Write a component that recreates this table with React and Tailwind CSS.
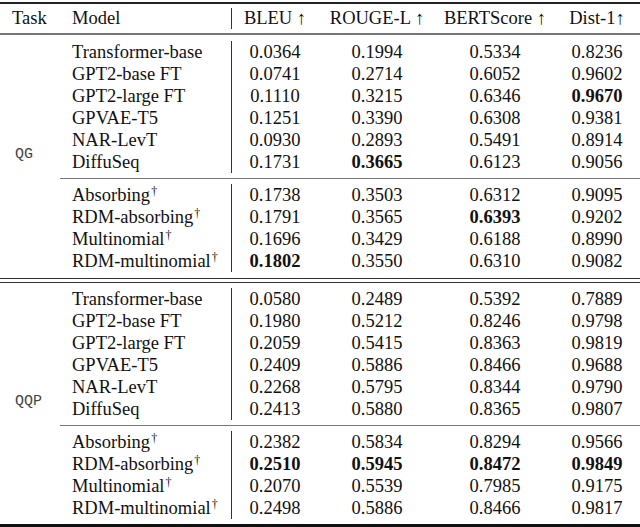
import React from "react";

const qg = [
  [
    ["Transformer-base", false, ["0.0364", "0.1994", "0.5334", "0.8236"], []],
    ["GPT2-base FT", false, ["0.0741", "0.2714", "0.6052", "0.9602"], []],
    ["GPT2-large FT", false, ["0.1110", "0.3215", "0.6346", "0.9670"], [3]],
    ["GPVAE-T5", false, ["0.1251", "0.3390", "0.6308", "0.9381"], []],
    ["NAR-LevT", false, ["0.0930", "0.2893", "0.5491", "0.8914"], []],
    ["DiffuSeq", false, ["0.1731", "0.3665", "0.6123", "0.9056"], [1]],
  ],
  [
    ["Absorbing", true, ["0.1738", "0.3503", "0.6312", "0.9095"], []],
    ["RDM-absorbing", true, ["0.1791", "0.3565", "0.6393", "0.9202"], [2]],
    ["Multinomial", true, ["0.1696", "0.3429", "0.6188", "0.8990"], []],
    ["RDM-multinomial", true, ["0.1802", "0.3550", "0.6310", "0.9082"], [0]],
  ],
];

const qqp = [
  [
    ["Transformer-base", false, ["0.0580", "0.2489", "0.5392", "0.7889"], []],
    ["GPT2-base FT", false, ["0.1980", "0.5212", "0.8246", "0.9798"], []],
    ["GPT2-large FT", false, ["0.2059", "0.5415", "0.8363", "0.9819"], []],
    ["GPVAE-T5", false, ["0.2409", "0.5886", "0.8466", "0.9688"], []],
    ["NAR-LevT", false, ["0.2268", "0.5795", "0.8344", "0.9790"], []],
    ["DiffuSeq", false, ["0.2413", "0.5880", "0.8365", "0.9807"], []],
  ],
  [
    ["Absorbing", true, ["0.2382", "0.5834", "0.8294", "0.9566"], []],
    ["RDM-absorbing", true, ["0.2510", "0.5945", "0.8472", "0.9849"], [0, 1, 2, 3]],
    ["Multinomial", true, ["0.2070", "0.5539", "0.7985", "0.9175"], []],
    ["RDM-multinomial", true, ["0.2498", "0.5886", "0.8466", "0.9817"], []],
  ],
];

const widths = ["w-[86px]", "w-[118px]", "w-[118px]", "w-[86px]"];

function Row({ name, dagger, vals, bold }) {
  return (
    <div className="flex h-[22px] items-center">
      <div className="w-[171px] pl-[12px] whitespace-nowrap">
        {name}
        {dagger && <sup className="text-[12px] ml-[1px]">†</sup>}
      </div>
      <div className="flex h-full items-center border-l border-[#333]">
        {vals.map((v, i) => (
          <div
            key={i}
            className={`${widths[i]} text-center ${bold.includes(i) ? "font-bold" : ""}`}
          >
            {v}
          </div>
        ))}
      </div>
    </div>
  );
}

function Section({ label, groups }) {
  return (
    <div className="flex">
      <div className="w-[60px] flex items-center pl-[15px] pb-[4px] font-[Liberation_Mono] text-[15px] text-[#444]">
        {label}
      </div>
      <div className="flex flex-col">
        {groups[0].map((r, i) => (
          <Row key={i} name={r[0]} dagger={r[1]} vals={r[2]} bold={r[3]} />
        ))}
        <div className="h-[11px] flex items-center">
          <div className="h-[1.5px] w-full bg-[#777]" />
        </div>
        {groups[1].map((r, i) => (
          <Row key={i} name={r[0]} dagger={r[1]} vals={r[2]} bold={r[3]} />
        ))}
      </div>
    </div>
  );
}

export default function App() {
  return (
    <div className="w-[640px] h-[527px] bg-white text-[#111] font-[Liberation_Serif] text-[18.5px] leading-[22px] pt-[2px] overflow-hidden">
      <div className="h-[2px] bg-[#222]" />
      <div className="flex h-[29px] items-center pb-[1px]">
        <div className="w-[60px] pl-[12px]">Task</div>
        <div className="w-[171px] pl-[12px]">Model</div>
        <div className="flex h-[21px] items-center border-l border-[#333]">
          <div className="w-[86px] text-center">BLEU ↑</div>
          <div className="w-[118px] text-center">ROUGE-L ↑</div>
          <div className="w-[118px] text-center">BERTScore ↑</div>
          <div className="w-[86px] text-center">Dist-1↑</div>
        </div>
      </div>
      <div className="h-[2px] bg-[#777]" />
      <div className="h-[6px]" />
      <Section label="QG" groups={qg} />
      <div className="h-[16px] flex flex-col justify-center gap-[3px]">
        <div className="h-px bg-[#333]" />
        <div className="h-px bg-[#333]" />
      </div>
      <Section label="QQP" groups={qqp} />
      <div className="h-[5px]" />
      <div className="h-[3px] bg-[#111]" />
    </div>
  );
}
